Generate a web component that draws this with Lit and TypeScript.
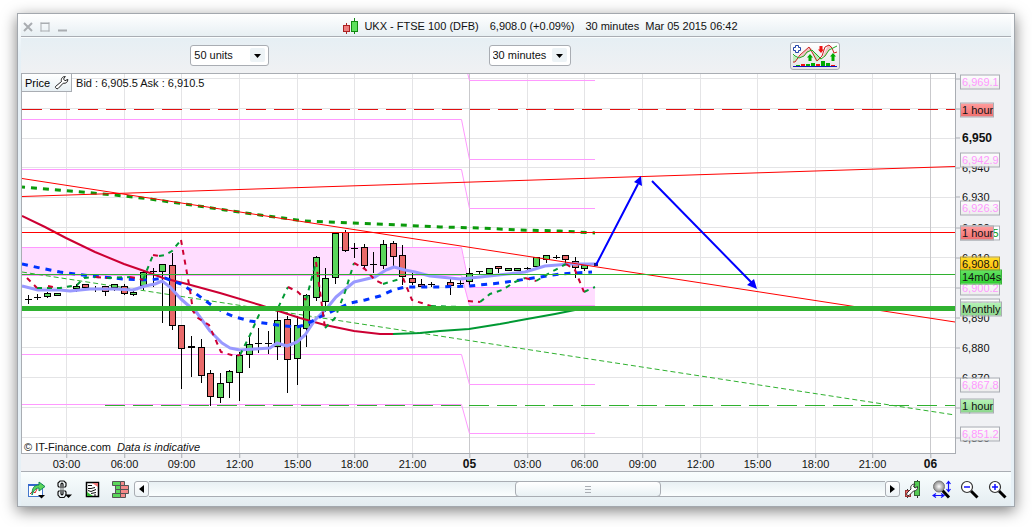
import { LitElement, html, svg, css } from "lit";
import { customElement } from "lit/decorators.js";

// Canvas of the plot, in chart units.
const X0 = 22;
const Y0 = 74;
const W = 933;
const H = 379;

const timeTicks: [number, string][] = [
  [66, "03:00"], [124, "06:00"], [181, "09:00"], [239, "12:00"], [297, "15:00"], [354, "18:00"],
  [412, "21:00"], [469, "05"], [527, "03:00"], [584, "06:00"], [642, "09:00"], [700, "12:00"],
  [757, "15:00"], [815, "18:00"], [872, "21:00"], [930, "06"],
];

const priceTicks: [number, string][] = [
  [78, ""], [108, "6,960"], [138, "6,950"], [167, "6,940"], [197, "6,930"], [227, "6,920"],
  [257, "6,910"], [287, "6,900"], [317, "6,890"], [347, "6,880"], [377, "6,870"], [407, "6,860"],
  [437, "6,850"],
];

const tags: [number, string, string][] = [
  [82, "6,969.1", "pivot"], [160, "6,942.9", "pivot"], [209, "6,926.3", "pivot"],
  [233, "6,918.5", "average"], [288, "6,900.2", "pivot"], [306, "6,894.1", "pivot"],
  [385, "6,867.8", "pivot"], [434, "6,851.2", "pivot"],
  [110, "1 hour", "sell"], [233, "1 hour", "sell"], [264, "6,908.0", "last"],
  [277, "14m04s", "timer"], [309, "Monthly", "buy"], [406, "1 hour", "buy"],
];

// centre, high, low, body top, body bottom, direction (u up, d down, n flat)
type Candle = [number, number, number, number, number, string];
const candles: Candle[] = [
  [28, 295, 304, 299, 300, "n"], [37, 294, 300, 297, 298, "n"], [47, 292, 298, 293, 297, "u"],
  [57, 293, 296, 293, 296, "u"], [76, 284, 292, 286, 289, "u"], [85, 284, 288, 284, 288, "d"],
  [95, 286, 292, 288, 290, "n"], [105, 286, 296, 286, 292, "d"], [114, 284, 291, 284, 288, "u"],
  [124, 284, 295, 286, 294, "d"], [133, 291, 296, 292, 295, "u"], [143, 271, 290, 272, 286, "u"],
  [153, 268, 287, 271, 272, "n"], [162, 264, 323, 264, 272, "u"], [172, 253, 330, 265, 326, "d"],
  [181, 325, 389, 325, 349, "d"], [191, 336, 377, 346, 348, "n"], [201, 339, 383, 347, 376, "d"],
  [210, 370, 406, 373, 397, "d"], [220, 373, 403, 383, 398, "u"], [229, 370, 398, 371, 383, "u"],
  [239, 352, 401, 355, 373, "u"], [249, 335, 368, 344, 355, "u"], [258, 328, 353, 343, 344, "n"],
  [268, 331, 354, 343, 344, "n"], [277, 311, 360, 320, 347, "u"], [287, 316, 393, 319, 360, "d"],
  [297, 316, 385, 325, 359, "u"], [306, 294, 347, 295, 329, "u"], [316, 256, 301, 257, 298, "u"],
  [325, 268, 312, 278, 302, "u"], [335, 232, 284, 233, 278, "u"], [345, 230, 252, 232, 251, "d"],
  [354, 243, 258, 248, 249, "n"], [364, 244, 268, 247, 266, "d"], [373, 252, 273, 264, 265, "n"],
  [383, 240, 269, 244, 266, "u"], [393, 241, 268, 243, 257, "d"], [402, 245, 285, 255, 277, "d"],
  [412, 273, 285, 278, 283, "d"], [421, 279, 287, 284, 287, "d"], [431, 282, 287, 284, 285, "n"],
  [450, 279, 295, 282, 286, "d"], [460, 280, 286, 283, 284, "n"], [469, 268, 285, 273, 282, "u"],
  [479, 271, 274, 271, 272, "n"], [489, 268, 274, 268, 274, "u"], [498, 266, 273, 266, 269, "d"],
  [508, 268, 271, 268, 271, "u"], [517, 268, 271, 268, 271, "u"], [527, 267, 271, 268, 269, "n"],
  [536, 257, 267, 257, 267, "u"], [546, 255, 263, 255, 260, "u"], [556, 255, 259, 257, 258, "n"],
  [565, 255, 263, 255, 260, "d"], [575, 257, 278, 261, 268, "d"], [584, 265, 271, 265, 269, "u"],
];

const signalDown = [
  "27,278 37,288", "48,286 53,287", "96,277 107,278", "130,277 137,278 143,280", "153,255 159,256",
  "181,240 190,290 193,311 198,318 209,325 221,352 235,356 240,355", "288,287 298,292 306,300",
  "316,262 325,328", "354,263 365,269 375,280 383,284", "403,278 412,300 425,304 431,306",
  "468,301 480,302", "525,278 536,281", "566,264 575,270 584,292",
];
const signalUp = [
  "37,288 60,288 77,285 84,278 96,277", "107,278 130,277", "143,280 153,255", "159,256 165,255 172,251 181,240",
  "240,355 250,335 262,308 277,310 288,287", "306,300 316,262", "325,328 335,318 345,292 354,263",
  "383,284 403,278", "431,306 460,307", "480,302 490,294 502,290 515,282 525,278",
  "536,281 555,270 566,264", "584,292 595,287",
];

const pivots = [
  "461.5,50 469.5,80.5 595,80.5", "22,119.5 461.5,119.5 469.5,159.5 595,159.5",
  "22,169.5 461.5,169.5 469.5,208.5 595,208.5", "22,247.5 461.5,247.5 469.5,287.5 595,287.5",
  "22,275.5 461.5,275.5 469.5,305.5 595,305.5", "22,354.5 461.5,354.5 469.5,384.5 595,384.5",
  "22,404.5 461.5,404.5 469.5,433.5 595,433.5",
];

@customElement("price-plot")
export class PricePlot extends LitElement {
  static styles = css`
    :host { display: block; position: relative; min-width: 0; min-height: 0; overflow: hidden; background: #fff; }
    .canvas { position: absolute; inset: 0; width: 100%; height: 100%; display: block; }
    .canvas * { fill: none; }
    .crisp { shape-rendering: crispEdges; }
    .grid { stroke: #e4e4e6; }
    .day { stroke: #c9c9cc; }
    .canvas .band { fill: #fdf; }
    .pivot { stroke: #f9f; }
    .red { stroke: #f00; }
    .green { stroke: #2fb12f; }
    .hour { stroke-dasharray: 20 8; }
    .sell { stroke: #e00f0f; }
    .monthly { stroke: #30b230; stroke-width: 5; }
    .slope { stroke-dasharray: 5 3; }
    .far { stroke: #0b9a0b; stroke-width: 3; stroke-dasharray: 6 6; stroke-dashoffset: 3; }
    .slow { stroke-width: 2; }
    .falling { stroke: #c03; }
    .rising { stroke: #093; }
    .mid { stroke: #03f; stroke-width: 3; stroke-dasharray: 6 6; }
    .fast { stroke: #99f; stroke-width: 3; stroke-linejoin: round; }
    .signal { stroke-width: 2; stroke-dasharray: 5 5; }
    .wick { stroke: #000; }
    .body { stroke: #000; }
    .canvas .u { fill: #5bd65b; }
    .canvas .d { fill: #e96a6a; }
    .canvas .n { fill: #000; }
    .arrow { stroke: #00f; stroke-width: 2; }
    .canvas .head { fill: #00f; }
    .canvas .now { fill: #226; }
    .top { position: absolute; top: 0; left: 0; display: flex; align-items: center; gap: 4px; }
    .price { display: flex; align-items: center; gap: 4px; height: 18px; padding: 0 2px 0 3px; font: 11px/16px "Liberation Sans", Arial, sans-serif; color: #000;
      border: 0 solid #a9adb3; border-width: 0 1px 1px 0; background: linear-gradient(#fff, #e8f0f4); }
    .credit { position: absolute; left: 2px; bottom: 0; margin: 0; line-height: 12px; }
    .credit em { margin-left: 3px; }
  `;

  private candle([x, hi, lo, top, bottom, kind]: Candle) {
    return svg`<path class="wick crisp" d="M${x + 0.5} ${hi}V${lo}"></path>
      ${kind === "n"
        ? svg`<rect class="n crisp" x=${x - 3} y=${top} width="7" height=${bottom - top}></rect>`
        : svg`<rect class="body crisp ${kind}" x=${x - 2.5} y=${top + 0.5} width="6" height=${bottom - top - 1}></rect>`}`;
  }

  render() {
    return html`
      <svg class="canvas" viewBox="${X0} ${Y0} ${W} ${H}" preserveAspectRatio="none" role="img" aria-label="UKX candlestick chart">
        ${priceTicks.map(([y]) => svg`<path class="grid crisp" d="M22 ${y + 0.5}H955"></path>`)}
        ${timeTicks.map(([x, t]) => svg`<path class="crisp ${t.length < 3 ? "day" : "grid"}" d="M${x + 0.5} 74V453"></path>`)}
        <polygon class="band" points="22,247 461,247 469,287 595,287 595,306 469,306 461,275 22,275"></polygon>
        ${pivots.map((p) => svg`<polyline class="pivot" points=${p}></polyline>`)}
        <path class="sell hour crisp" d="M22 109.5H955"></path>
        <path class="green hour crisp" d="M105 405.5H955"></path>
        <path class="green slope" d="M22 272L955 415"></path>
        ${candles.map((c) => this.candle(c))}
        <polyline class="slow falling" points="22,216 45,227 66,238 95,252 124,264 150,273 163,278 187,284 220,293 260,305 300,318 325,325 354,331 380,334 393,334"></polyline>
        <polyline class="slow rising" points="393,334 420,333 440,331 469,329 500,324 527,319 555,314 575,310 590,307"></polyline>
        <polyline class="fast" points="22,286 38,290 60,290 70,291 90,289 115,289 133,290 145,286 155,284 162,281 170,287 181,299 197,313 210,331 222,343 230,348 240,350 255,349 270,348 277,343 287,346 297,342 305,335 315,320 327,308 336,297 354,282 375,277 386,270 394,267 405,270 415,272 430,276 460,279 480,277 525,272 545,266 570,264 597,264"></polyline>
        <polyline class="mid" points="22,264 40,268 60,272 90,276 124,279 150,280 165,278 181,284 195,293 210,304 225,313 235,317 250,321 270,324 285,326 297,327 305,325 320,317 335,310 350,303 365,300 380,296 393,290 405,287 440,287 469,286 500,283 527,279 560,274 592,272"></polyline>
        ${signalUp.map((p) => svg`<polyline class="signal rising" points=${p}></polyline>`)}
        ${signalDown.map((p) => svg`<polyline class="signal falling" points=${p}></polyline>`)}
        <polyline class="far" points="22,187 70,191 115,195 150,199 205,207 225,210 260,215 305,221 350,223 400,225 440,227 480,228 520,230 560,231 595,233"></polyline>
        <path class="red" d="M22 178.5L955 322"></path>
        <path class="red" d="M22 196.5L955 166.5"></path>
        <path class="red crisp" d="M22 232.5H955"></path>
        <path class="green crisp" d="M22 274.5H955"></path>
        <path class="monthly crisp" d="M22 308.5H955"></path>
        <rect class="now" x="594" y="263" width="4" height="3"></rect>
        <path class="arrow" d="M596 265L638 184M652 181L752 283"></path>
        <path class="head" d="M641 176L642 186L634 182ZM757 289L747 285L754 279Z"></path>
      </svg>
      <div class="top">
        <button class="price" type="button">Price
          <svg width="15" height="15" viewBox="0 0 15 15" aria-hidden="true">
            <path d="M1.5 11.5L7.5 6.5C6.8 4 8 1.5 11.3 1.5L9.5 4L11 5.8L13.8 4.3C14 7 12 8.8 9.2 8.2L4 13.6C3 14.2 .8 13 1.5 11.5Z" fill="#fff" stroke="#222"></path>
          </svg>
        </button>
        <span>Bid : 6,905.5 Ask : 6,910.5</span>
      </div>
      <p class="credit">© IT-Finance.com <em>Data is indicative</em></p>`;
  }
}

@customElement("price-axis")
export class PriceAxis extends LitElement {
  static styles = css`
    :host { display: block; position: relative; background: #f0f1f4; }
    .tick, .tag { position: absolute; transform: translateY(-50%); white-space: nowrap; }
    .tick { left: 0; display: flex; align-items: center; gap: 2px; height: 15px; }
    .tick::before { content: ""; width: 4px; height: 1px; background: #a9adb3; }
    .strong { font-weight: bold; font-size: 12px; }
    .tag { left: 4px; box-sizing: border-box; height: 15px; line-height: 13px; padding-left: 1px; border: 1px solid #a9adb3; }
    .pivot { background: linear-gradient(#fdfdfd, #ededed); color: #f9f; }
    .average { background: #fff; color: #0b9a0b; }
    .sell { background: linear-gradient(#ff9c9c, #ef7070); }
    .buy { background: linear-gradient(#b6f3b6, #8cd68c); }
    .last { background: linear-gradient(#ffde28, #ffbb0c); border-color: #b79a2a; }
    .timer { background: linear-gradient(#62e262, #30cf30); border-color: #3cb43c; }
  `;

  render() {
    const top = (y: number) => `top:${((y + 0.5 - Y0) / H) * 100}%`;
    return html`
      ${priceTicks.map(([y, t]) => html`<span class="tick ${t === "6,950" ? "strong" : ""}" style=${top(y)}>${t}</span>`)}
      ${tags.map(([y, t, kind]) => html`<span class="tag ${kind}" style=${top(y - 1)}>${t}</span>`)}`;
  }
}

@customElement("time-axis")
export class TimeAxis extends LitElement {
  static styles = css`
    :host { display: block; position: relative; height: 17px; background: #f0f1f4; }
    .tick { position: absolute; top: 0; transform: translateX(-50%); display: flex; flex-direction: column; align-items: center; line-height: 13px; }
    .tick::before { content: ""; width: 1px; height: 4px; background: #a9adb3; }
    .strong { font-weight: bold; font-size: 12px; }
  `;

  render() {
    return timeTicks.map(([x, t]) => html`<span class="tick ${t.length < 3 ? "strong" : ""}" style="left:${((x + 0.5 - X0) / W) * 100}%">${t}</span>`);
  }
}

const lens = (mark: unknown) => html`
  <svg width="19" height="19" viewBox="0 0 19 19" aria-hidden="true">
    <path d="M11 11L17.5 17.5" stroke="#000" stroke-width="3"></path>
    <circle cx="7" cy="7" r="5.5" fill="#fff" stroke="#333" stroke-width="1.2"></circle>${mark}
  </svg>`;

@customElement("app-root")
export class AppRoot extends LitElement {
  static styles = css`
    :host { display: flex; box-sizing: border-box; min-height: 100vh; padding: 13px 17px 20px; background: #fff;
      font: 11px/13px "Liberation Sans", Arial, sans-serif; color: #111; }
    svg { display: block; flex: none; }
    button { padding: 0; border: 0; background: none; cursor: pointer; }
    .window { flex: 1; min-width: 0; display: flex; flex-direction: column; padding: 0 3px; border: 1px solid #a3a8ae;
      background: linear-gradient(#fff, #e6f0f6 40px); box-shadow: 0 4px 14px rgba(0, 0, 0, 0.5); }
    .title { display: flex; align-items: center; height: 22px; border-bottom: 1px solid #a9adb3; background: linear-gradient(#fff, #e7eff3); }
    .controls { display: flex; gap: 7px; padding: 3px 0 0 2px; }
    .caption { flex: 1; display: flex; align-items: center; justify-content: center; margin: 0; font: inherit; padding: 2px 0 0 3px; white-space: nowrap; }
    .name { margin: 0 11px 0 5px; }
    .change { margin-right: 11px; }
    .period { margin-right: 6px; }
    .toolbar { display: flex; align-items: center; justify-content: space-between; box-sizing: border-box; height: 36px; padding: 0 17.3% 0 17.1%;
      border-top: 1px solid #fafdfe; background: linear-gradient(#e6eff4, #f0f1f3); }
    select { appearance: none; box-sizing: border-box; height: 21px; padding: 0 22px 0 3px; border: 1px solid #a9adb3; border-radius: 3px; color: #111;
      font: inherit; background: url('data:image/svg+xml,<svg xmlns="http://www.w3.org/2000/svg" width="17" height="17"><rect width="15" height="14" y="1" rx="2" fill="%23edf3f6"/><path d="M4 7h7L7.5 11z"/></svg>') right 1px center no-repeat #fff; }
    .units { width: 79px; }
    .frame { width: 82px; }
    .indicators { border: 1px solid #a9adb3; border-radius: 3px; background: linear-gradient(#fff, #e4e4e6); }
    .chart { flex: 1; display: grid; grid-template: 1fr auto / 1fr 55px; background: #f0f1f4; border-bottom: 1px solid #a9adb3; }
    price-plot { border: 1px solid #a9adb3; }
    price-axis { border: 1px solid #f0f1f4; border-width: 1px 0; }
    time-axis { border: 1px solid #f0f1f4; border-width: 0 1px; }
    .footer { display: flex; align-items: center; height: 34px; gap: 4px; padding: 0 4px 0 6px; background: linear-gradient(#f9fefe, #e4edf1); }
    .tools { display: flex; align-items: center; gap: 9px; }
    .tools button { display: grid; place-items: center; }
    .scroller { flex: 1; min-width: 0; display: flex; height: 16px; }
    .step { box-sizing: border-box; width: 15px; display: grid; place-items: center; border: 1px solid #a9adb3; border-radius: 3px; background: linear-gradient(#fff, #edf3f6); }
    .range { appearance: none; flex: 1; min-width: 0; margin: 0; box-sizing: border-box; height: 16px; border: 1px solid #a9adb3; border-width: 1px 0; background: linear-gradient(#e8f0f3, #fbfefe); }
    .range::-webkit-slider-thumb { appearance: none; box-sizing: border-box; width: 146px; height: 16px; border: 1px solid #a9adb3; border-radius: 4px;
      background: repeating-linear-gradient(#a9adb3 0 1px, transparent 1px 3px) center / 6px 7px no-repeat, linear-gradient(#fff, #e9f1f4); }
  `;

  render() {
    return html`
      <main class="window">
        <header class="title">
          <div class="controls">
            <button type="button" aria-label="Close"><svg width="10" height="10" viewBox="0 0 10 10"><path d="M1 1L9 9M9 1L1 9" stroke="#a9adb1" stroke-width="2"></path></svg></button>
            <button type="button" aria-label="Maximise"><svg width="10" height="10" viewBox="0 0 10 10"><path d="M1 1.5H9M1 .5V9.5M9 .5V9.5M.5 9H9.5M.5 1H9.5" stroke="#a9adb1" fill="none"></path></svg></button>
            <button type="button" aria-label="Minimise"><svg width="10" height="10" viewBox="0 0 10 10"><path d="M1 8.5H10" stroke="#a9adb1" stroke-width="2"></path></svg></button>
          </div>
          <h1 class="caption">
            <svg width="16" height="17" viewBox="0 0 16 17" aria-hidden="true">
              <path d="M3.5 5V16" stroke="#a22"></path><rect x=".5" y="7.5" width="6" height="6" fill="#ee7e7e" stroke="#a22"></rect>
              <path d="M11.5 0V16" stroke="#181"></path><rect x="8.5" y="3.5" width="6" height="10" fill="#5de05d" stroke="#181"></rect>
            </svg>
            <span class="name">UKX - FTSE 100 (DFB)</span><span class="change">6,908.0 (+0.09%)</span><span class="period">30 minutes</span><span>Mar 05 2015 06:42</span>
          </h1>
        </header>
        <div class="toolbar">
          <select class="units" aria-label="Units shown"><option>50 units</option></select>
          <select class="frame" aria-label="Time frame"><option>30 minutes</option></select>
          <button class="indicators" type="button" aria-label="Add indicator">
            <svg width="48" height="26" viewBox="0 0 48 26">
              <path d="M2 12L7 16L2 20ZM20 7L25 19L31 16L26 11Z" fill="#bdeebd"></path>
              <path d="M8 14L18 4L21 6L12 14ZM32 13L37 2L41 3L37 9L34 14Z" fill="#f3c3c3"></path>
              <path d="M2 19H4L9 12L18 4L21 9L26 18L31 13L34 4L38 2L41 5L43 10L46 9" fill="none" stroke="#c22"></path>
              <path d="M2 11L4 13L8 15L13 13L16 9L21 7L26 12L30 16L34 13L38 7L42 5L46 3" fill="none" stroke="#2a2"></path>
              <path d="M19 11L22 14.5H20.5V18H17.5V14.5H16ZM42 10L45 13.5H43.5V18H40.5V13.5H39Z" fill="#0a0"></path>
              <path d="M30 10L27 6.5H28.5V3H31.5V6.5H33Z" fill="#e11"></path>
              <path d="M5 22H9V23H5ZM15 21H19V23H15ZM20 20H24V23H20ZM30 18H34V23H30ZM35 20H39V23H35Z" fill="#0a0"></path>
              <path d="M10 21H14V23H10ZM25 21H29V23H25ZM40 22H44V23H40Z" fill="#e11"></path>
              <path d="M2 23.5H46" stroke="#11b"></path>
              <path d="M4.5 2.5H7.5V4.5H9.5V7.5H7.5V9.5H4.5V7.5H2.5V4.5H4.5Z" fill="#fff" stroke="#24a"></path>
            </svg>
          </button>
        </div>
        <section class="chart">
          <price-plot></price-plot>
          <price-axis></price-axis>
          <time-axis></time-axis>
        </section>
        <footer class="footer">
          <div class="tools">
            <button type="button" aria-label="Share chart"><svg width="19" height="19" viewBox="0 0 19 19">
              <rect x="1.5" y="4.5" width="14" height="12" fill="#fff" stroke="#47c"></rect><path d="M1 5H16" stroke="#36c" stroke-width="2"></path>
              <path d="M3 14L6 11L8 13L10 9" stroke="#d22" fill="none"></path>
              <path d="M5 15C5 8 7 5 12 5V2L18 6.5L12 11V8C9 8 7 10 5 15Z" fill="#5bd65b" stroke="#185"></path>
              <path d="M11 15H18L14.5 18.5Z" fill="#000"></path></svg></button>
            <button type="button" aria-label="Link windows"><svg width="19" height="19" viewBox="0 0 19 19">
              <path d="M4.500 7.500L3 6V3L5 1H9L11 3V6L9.500 7.500M6 8.500V4L7 3L8 4V8.500M4.500 10.500L3 12V15L5 17.500H9L11 15V12L9.500 10.500M6 9.500V14L7 15L8 14V9.500" fill="none" stroke="#111" stroke-width="1.200"></path>
              <path d="M10 14.5H17L13.5 18Z" fill="#000"></path></svg></button>
            <button type="button" aria-label="Order list"><svg width="19" height="19" viewBox="0 0 19 19">
              <rect x="3.5" y="2.5" width="12" height="14" fill="#fff" stroke="#000" stroke-width="1.5"></rect>
              <path d="M9 3H15V7Z" fill="#e77"></path><path d="M4 16V12L10 16Z" fill="#3b3"></path>
              <path d="M5 5.5H9M5 8.5H8L12 7.5M5 10.5L8 11.5L13 9.500M8 13.5L13 12.5M11 15H13" stroke="#111" fill="none"></path></svg></button>
            <button type="button" aria-label="Order book"><svg width="19" height="19" viewBox="0 0 19 19">
              <path d="M1.5 1.5H9.5V5.5H1.5ZM4.5 5.5H9.5V9.5H4.5ZM4.5 9.5H9.5V13.5H4.5ZM1.5 13.5H9.5V17.5H1.5Z" fill="#5bd65b" stroke="#555"></path>
              <path d="M9.5 1.5H13.5V5.5H9.5ZM9.5 5.5H17.5V9.5H9.5ZM9.5 9.5H17.5V13.5H9.5ZM9.5 13.5H14.5V17.5H9.5Z" fill="#f48a8a" stroke="#555"></path></svg></button>
          </div>
          <div class="scroller">
            <button class="step" type="button" aria-label="Scroll back"><svg width="5" height="8" viewBox="0 0 5 8"><path d="M5 0V8L0 4Z"></path></svg></button>
            <input class="range" type="range" min="0" max="100" value="62" aria-label="Chart position" />
            <button class="step" type="button" aria-label="Scroll forward"><svg width="5" height="8" viewBox="0 0 5 8"><path d="M0 0V8L5 4Z"></path></svg></button>
          </div>
          <div class="tools">
            <button type="button" aria-label="Chart settings"><svg width="19" height="19" viewBox="0 0 19 19">
              <path d="M13.5 0V18M3.5 9V18" stroke="#333"></path><rect x="10.5" y="1.5" width="5" height="14" fill="#5c5" stroke="#363"></rect>
              <rect x="1.5" y="10.5" width="5" height="6" fill="#e66" stroke="#933"></rect>
              <path d="M3 13L7 9C6 6 8 4 11 4L9.5 6.5L11 8L13.5 6.5C14 9.5 12 11 9.5 11L5 15.5C3 16 2 14.5 3 13Z" fill="#fff" stroke="#333"></path></svg></button>
            <button type="button" aria-label="Fit chart"><svg width="19" height="19" viewBox="0 0 19 19">
              <defs><radialGradient id="glass"><stop stop-color="#fff"></stop><stop offset="1" stop-color="#888"></stop></radialGradient></defs>
              <path d="M10 10L17 17.5" stroke="#000" stroke-width="3"></path><circle cx="7" cy="6.5" r="5.5" fill="url(#glass)" stroke="#777"></circle>
              <path d="M16.5 2V11M14.5 4L16.5 1.5L18.5 4M14.5 9L16.5 11.5L18.5 9M2 15.5H11M4 13.5L1 15.5L4 17.5M9 13.5L12 15.5L9 17.5" fill="none" stroke="#11f" stroke-width="1.2"></path></svg></button>
            <button type="button" aria-label="Zoom out">${lens(svg`<path d="M4 7H10" stroke="#11f" stroke-width="1.5"></path>`)}</button>
            <button type="button" aria-label="Zoom in">${lens(svg`<path d="M4 7H10M7 4V10" stroke="#11f" stroke-width="1.5"></path>`)}</button>
          </div>
        </footer>
      </main>`;
  }
}
